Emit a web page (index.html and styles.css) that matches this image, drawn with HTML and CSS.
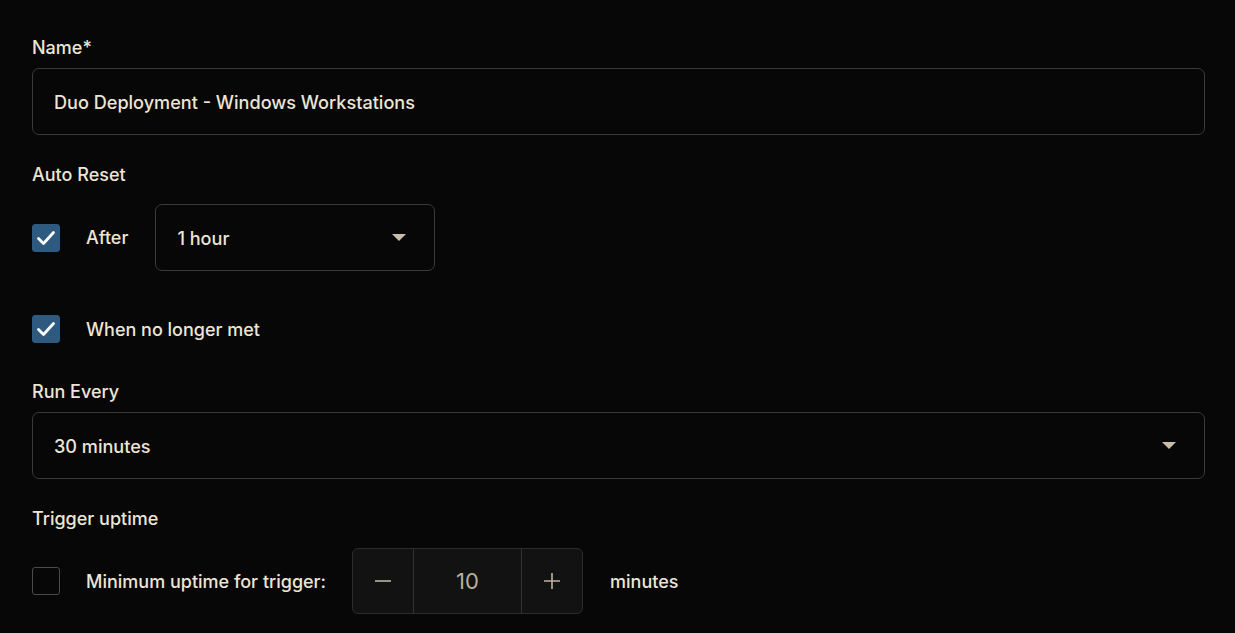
FILE: index.html
```html
<!DOCTYPE html>
<html>
<head>
<meta charset="utf-8">
<link rel="stylesheet" href="styles.css">
</head>
<body>
<div class="form">
  <div class="field">
    <div class="label">Name*</div>
    <div class="input">Duo Deployment - Windows Workstations</div>
  </div>

  <div class="field gap-lg">
    <div class="label">Auto Reset</div>
    <div class="row row-after">
      <span class="check checked"><svg viewBox="0 0 28 28" width="28" height="28"><path d="M6.5 14.5l5 5L21.5 8.5" fill="none" stroke="#fff" stroke-width="2.8" stroke-linecap="round" stroke-linejoin="round"/></svg></span>
      <span class="text">After</span>
      <div class="select small"><span>1 hour</span><span class="caret"></span></div>
    </div>
    <div class="row row-met">
      <span class="check checked"><svg viewBox="0 0 28 28" width="28" height="28"><path d="M6.5 14.5l5 5L21.5 8.5" fill="none" stroke="#fff" stroke-width="2.8" stroke-linecap="round" stroke-linejoin="round"/></svg></span>
      <span class="text">When no longer met</span>
    </div>
  </div>

  <div class="field gap-run">
    <div class="label">Run Every</div>
    <div class="select wide"><span>30 minutes</span><span class="caret"></span></div>
  </div>

  <div class="field gap-lg">
    <div class="label">Trigger uptime</div>
    <div class="row row-uptime">
      <span class="check"></span>
      <span class="text">Minimum uptime for trigger:</span>
      <div class="stepper">
        <span class="step"><svg width="18" height="18" viewBox="0 0 18 18"><path d="M1 9h16" stroke="#bdb3a2" stroke-width="1.6"/></svg></span>
        <span class="value">10</span>
        <span class="step"><svg width="18" height="18" viewBox="0 0 18 18"><path d="M1 9h16M9 1v16" stroke="#bdb3a2" stroke-width="1.6"/></svg></span>
      </div>
      <span class="text unit">minutes</span>
    </div>
  </div>
</div>
</body>
</html>
```

FILE: styles.css
```css
* { box-sizing: border-box; }
html, body { margin: 0; padding: 0; }
body {
  background: #070707;
  color: #ede5d4;
  font-family: Inter, "Noto Sans", sans-serif;
  font-size: 18px;
}
.form {
  padding: 37px 30px 0 32px;
}
.field { display: flex; flex-direction: column; }
.gap-lg { margin-top: 29px; }
.gap-run { margin-top: 38px; }
.label {
  font-size: 18px;
  font-weight: 500;
  line-height: 20px;
  padding-top: 1px;
  margin-bottom: 10px;
}
.gap-lg > .label { margin-bottom: 19px; }
.input, .select {
  height: 67px;
  border: 1px solid #3a3a3a;
  border-radius: 7px;
  display: flex;
  align-items: center;
  padding: 0 21px;
  font-size: 18.1px;
  font-weight: 500;
}
.select { justify-content: space-between; padding-right: 28px; }
.select.small { width: 280px; }
.caret {
  width: 0; height: 0;
  border-left: 7px solid transparent;
  border-right: 7px solid transparent;
  border-top: 7px solid #c9bda9;
}
.row { display: flex; align-items: center; }
.row-met { margin-top: 44px; }
.check {
  width: 28px; height: 28px;
  border: 1px solid #4a4a4a;
  border-radius: 3px;
  flex: none;
  display: flex;
}
.check.checked {
  background: #2e5a80;
  border-color: #2e5a80;
}
.check.checked svg { margin: -1px; }
.text { margin-left: 26px; font-weight: 500; }
.row-after .text { margin-right: 27px; }
.stepper {
  margin-left: 26px;
  width: 231px;
  height: 66px;
  background: #121212;
  border: 1px solid #2c2c2c;
  border-radius: 6px;
  display: flex;
  align-items: center;
}
.step {
  width: 60px;
  height: 64px;
  display: flex;
  align-items: center;
  justify-content: center;
}
.value {
  flex: 1;
  height: 64px;
  border-left: 1px solid #333;
  border-right: 1px solid #333;
  display: flex;
  align-items: center;
  justify-content: center;
  color: #b9ae9a;
  font-size: 22px;
  font-weight: 400;
}
.unit { margin-left: 27px; }
```
